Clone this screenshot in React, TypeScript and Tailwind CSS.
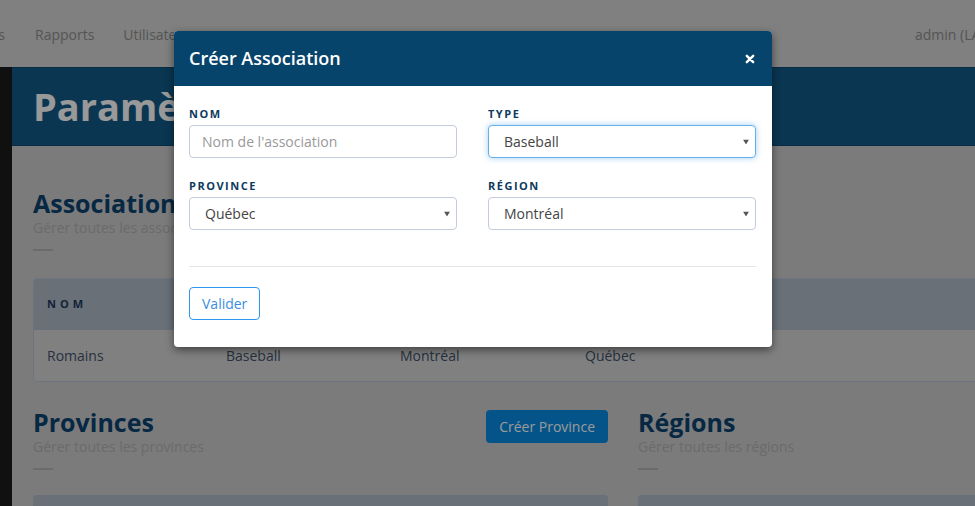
import { ChangeEvent, useState } from "react";

const font = "font-['Open_Sans','Liberation_Sans',sans-serif]";

const Caret = () => (
  <svg width="6" height="5" viewBox="0 0 6 5" className="pointer-events-none absolute right-[7px] top-1/2 -translate-y-1/2">
    <polygon points="0,0 6,0 3,5" fill="#555" />
  </svg>
);

function Select({ value, options, focused, onChange }: { value: string; options: string[]; focused?: boolean; onChange: (v: string) => void }) {
  return (
    <div className="relative">
      <select
        value={value}
        onChange={(e: ChangeEvent<HTMLSelectElement>) => onChange(e.target.value)}
        className={`h-[33px] w-full appearance-none rounded-[4px] border bg-white pl-[15px] pr-6 text-[14px] text-[#444] outline-none ${font} ${
          focused ? "border-[#66afe9] shadow-[0_0_6px_rgba(102,175,233,0.6)]" : "border-[#c2ccd9]"
        }`}
      >
        {options.map(o => <option key={o}>{o}</option>)}
      </select>
      <Caret />
    </div>
  );
}

const Label = ({ children }: { children: string }) => (
  <label className="mb-[4px] block text-[11px] font-bold leading-[15px] tracking-[1.5px] text-[#0d3a5e]">{children}</label>
);

function SectionHead({ title, sub }: { title: string; sub: string }) {
  return (
    <div>
      <h2 className="text-[25px] font-bold leading-[31px] text-[#0c4371]">{title}</h2>
      <p className="text-[14px] leading-[18px] text-[#b2b2b2]">{sub}</p>
      <div className="mt-[12px] h-[2px] w-[20px] bg-[#b2b2b2]" />
    </div>
  );
}

export default function App() {
  const [type, setType] = useState("Baseball");
  const [province, setProvince] = useState("Québec");
  const [region, setRegion] = useState("Montréal");

  return (
    <div className={`relative h-[506px] w-[975px] overflow-hidden bg-[#cdcdcd] ${font}`}>
      {/* page behind the modal */}
      <div className="w-[1240px]">
        <nav className="flex h-[67px] items-center bg-[#d5d5d5] pt-[1px] text-[14px] text-[#8e8e8e]">
          <div className="flex w-[915px] flex-none items-center gap-[29px]">
            <div className="flex w-[5px] justify-end whitespace-nowrap">Équipes</div>
            <span className="ml-[1px]">Rapports</span>
            <span>Utilisateurs</span>
          </div>
          <span className="whitespace-nowrap">admin (LAVAL)</span>
        </nav>

        <div className="flex">
          <div className="h-[500px] w-[12px] flex-none bg-[#1c1c1c]" />
          <main className="flex-1">
            <div className="flex h-[79px] items-center border-y border-[#0e4a72] bg-[#125a89] px-[21px]">
              <h1 className="text-[38px] font-bold text-white">Paramètres</h1>
            </div>

            <div className="px-[21px] pt-[42px]">
              <SectionHead title="Associations" sub="Gérer toutes les associations" />

              <div className="mt-[27px] overflow-hidden rounded-[4px] border border-[#b7c0d5]">
                <div className="flex h-[51px] items-center bg-[#afbbc8] text-[11px] font-bold tracking-[4px] text-[#213a5c]">
                  <div className="w-[192px] pl-[13px]">NOM</div>
                  <div className="w-[174px]">TYPE</div>
                  <div className="w-[185px]">RÉGION</div>
                  <div>PROVINCE</div>
                </div>
                <div className="flex h-[51px] items-center bg-[#d5d5d5] text-[14px] text-[#43536c]">
                  <div className="w-[192px] pl-[13px]">Romains</div>
                  <div className="w-[174px]">Baseball</div>
                  <div className="w-[185px]">Montréal</div>
                  <div>Québec</div>
                </div>
              </div>

              <div className="mt-[25px] grid grid-cols-[575px_1fr] gap-[30px]">
                <div>
                  <div className="flex items-start justify-between">
                    <SectionHead title="Provinces" sub="Gérer toutes les provinces" />
                    <button className="mt-[3px] h-[33px] rounded-[4px] bg-[#078ce4] px-[13px] text-[14px] text-white">Créer Province</button>
                  </div>
                  <div className="mt-[25px] h-[51px] rounded-[4px] bg-[#afbbc8]" />
                </div>
                <div>
                  <SectionHead title="Régions" sub="Gérer toutes les régions" />
                  <div className="mt-[25px] h-[51px] rounded-[4px] bg-[#afbbc8]" />
                </div>
              </div>
            </div>
          </main>
        </div>
      </div>

      {/* backdrop */}
      <div className="absolute inset-0 bg-black/40" />

      {/* modal */}
      <div className="absolute left-[174px] top-[31px] w-[598px] overflow-hidden rounded-[4px] bg-white shadow-[0_3px_9px_rgba(0,0,0,0.5)]">
        <div className="flex h-[55px] items-center justify-between bg-[#07446c] pl-[15px] pr-[17px]">
          <h4 className="text-[18px] font-semibold text-white">Créer Association</h4>
          <button type="button" aria-label="Fermer">
            <svg width="10" height="10" viewBox="0 0 10 10">
              <path d="M1.8 1.8l6.4 6.4M8.2 1.8l-6.4 6.4" stroke="#fff" strokeWidth="2.4" strokeLinecap="round" />
            </svg>
          </button>
        </div>

        <div className="pl-[15px] pr-[16px] pt-[20px]">
          <div className="grid grid-cols-[268px_268px] gap-x-[31px] gap-y-[20px]">
            <div>
              <Label>NOM</Label>
              <input
                placeholder="Nom de l'association"
                className={`h-[33px] w-full rounded-[4px] border border-[#c2ccd9] px-[12px] text-[14px] text-[#444] outline-none placeholder:text-[#999] ${font}`}
              />
            </div>
            <div>
              <Label>TYPE</Label>
              <Select value={type} options={["Baseball", "Hockey", "Soccer"]} focused onChange={setType} />
            </div>
            <div>
              <Label>PROVINCE</Label>
              <Select value={province} options={["Québec", "Ontario"]} onChange={setProvince} />
            </div>
            <div>
              <Label>RÉGION</Label>
              <Select value={region} options={["Montréal", "Laval"]} onChange={setRegion} />
            </div>
          </div>

          <div className="mt-[36px] border-t border-[#e5e5e5] pb-[27px] pt-[20px]">
            <button className="h-[33px] rounded-[4px] border border-[#2d96ee] px-[12px] text-[14px] text-[#3a8de0]">Valider</button>
          </div>
        </div>
      </div>
    </div>
  );
}
